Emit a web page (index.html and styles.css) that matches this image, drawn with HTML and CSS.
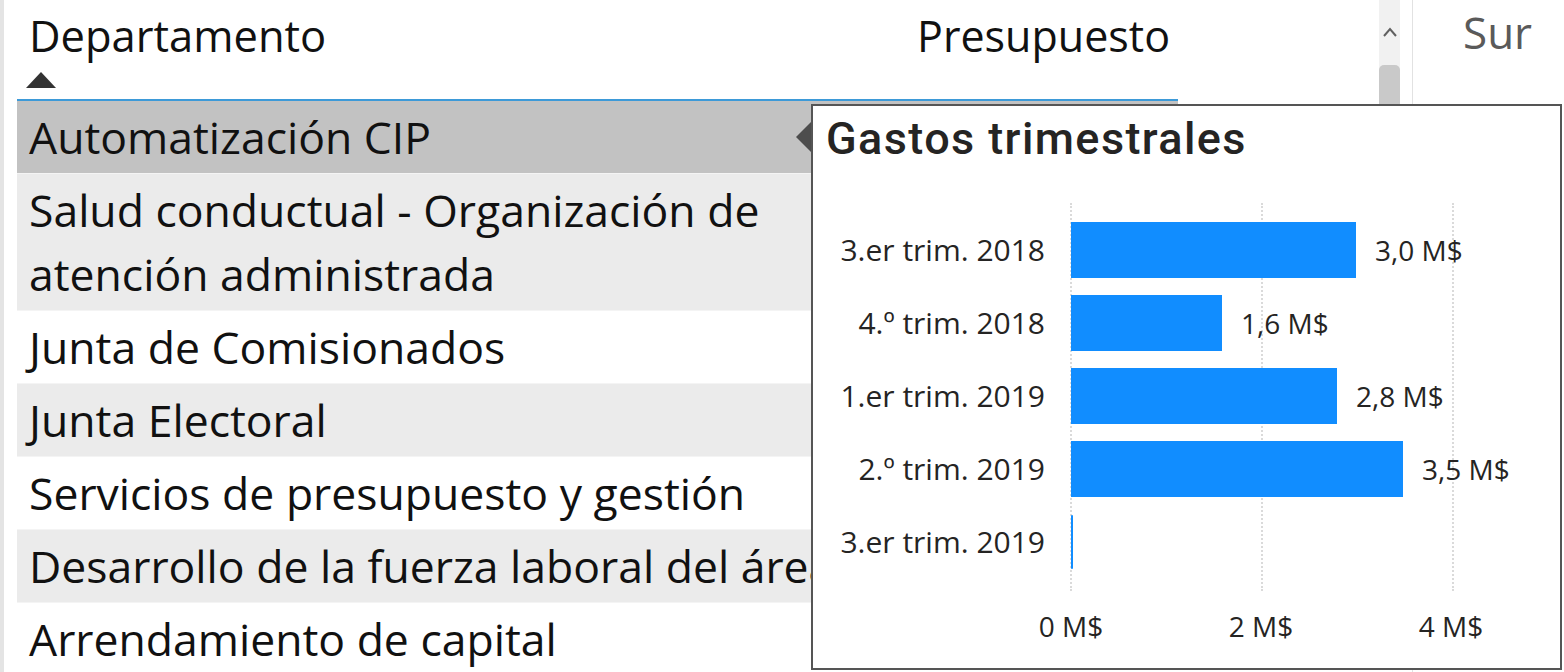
FILE: index.html
```html
<html>
  <head>
    <link rel="stylesheet" href="styles.css">
    <title>Presupuesto por departamento</title>
  </head>
  <body>
    <div class="page">
      <div class="edge"></div>

      <div class="table">
        <div class="head">
          <div class="col-name">
            <span>Departamento</span>
            <span class="sort"></span>
          </div>
          <div class="col-budget">Presupuesto</div>
        </div>
        <div class="row selected">Automatización CIP</div>
        <div class="row stripe">Salud conductual - Organización de<br>atención administrada</div>
        <div class="row">Junta de Comisionados</div>
        <div class="row stripe">Junta Electoral</div>
        <div class="row">Servicios de presupuesto y gestión</div>
        <div class="row stripe">Desarrollo de la fuerza laboral del área</div>
        <div class="row">Arrendamiento de capital</div>
      </div>

      <div class="scroll">
        <svg class="up" width="16" height="12" viewBox="0 0 16 12">
          <polyline points="2,10 8,3 14,10" fill="none" stroke="#606060" stroke-width="2"/>
        </svg>
        <div class="thumb"></div>
      </div>
      <div class="divider"></div>
      <div class="region">Sur</div>

      <!-- tooltip over the table -->
      <div class="tooltip">
        <div class="tip-title">Gastos trimestrales</div>
        <div class="chart">
          <div class="cats">
            <div class="cat">3.er trim. 2018</div>
            <div class="cat">4.º trim. 2018</div>
            <div class="cat">1.er trim. 2019</div>
            <div class="cat">2.º trim. 2019</div>
            <div class="cat">3.er trim. 2019</div>
          </div>
          <div class="plot-wrap">
            <div class="plot">
              <div class="grid">
                <div class="gl"></div>
                <div class="gl"></div>
                <div class="gl"></div>
              </div>
              <div class="bars">
                <div class="bar-row"><div class="bar" style="width:285px"></div><span class="val">3,0 M$</span></div>
                <div class="bar-row"><div class="bar" style="width:151px"></div><span class="val">1,6 M$</span></div>
                <div class="bar-row"><div class="bar" style="width:266px"></div><span class="val">2,8 M$</span></div>
                <div class="bar-row"><div class="bar" style="width:332px"></div><span class="val">3,5 M$</span></div>
                <div class="bar-row"><div class="bar tiny" style="width:2px"></div></div>
              </div>
            </div>
            <div class="axis">
              <span>0 M$</span>
              <span>2 M$</span>
              <span>4 M$</span>
            </div>
          </div>
        </div>
      </div>
    </div>
  </body>
</html>
```

FILE: styles.css
```css
body {
  margin: 0;
  background: white;
  font-family: "Open Sans", "Noto Sans", sans-serif;
  color: #111;
  overflow: hidden;
}

.page {
  display: flex;
  height: 672px;
  position: relative;
  overflow: hidden;
}

.edge {
  width: 4px;
  background: #e4e4e4;
  margin-right: 13px;
}

.table {
  width: 1161px;
}

.head {
  display: flex;
  justify-content: space-between;
  height: 99px;
  border-bottom: 2px solid #3d9ad8;
}
.col-name {
  display: flex;
  flex-direction: column;
  padding-left: 12px;
  padding-top: 6px;
  font-size: 43.5px;
  line-height: 60px;
}
.sort {
  width: 0;
  height: 0;
  margin-top: 6px;
  margin-left: -3px;
  border-left: 15px solid transparent;
  border-right: 15px solid transparent;
  border-bottom: 16px solid #333;
}
.col-budget {
  font-size: 43px;
  line-height: 60px;
  padding-top: 6px;
  padding-right: 8px;
}

.row {
  font-size: 44.5px;
  line-height: 64px;
  padding: 4px 12px;
  border-bottom: 1px solid #f4f4f4;
  white-space: nowrap;
}
.row.stripe {
  background: #ebebeb;
}
.row.selected {
  background: #c2c2c2;
}

.scroll {
  margin-left: 201px;
  width: 21px;
  height: 104px;
  background: #f1f1f1;
  display: flex;
  flex-direction: column;
  align-items: center;
}
.up {
  margin-top: 26px;
  margin-bottom: 27px;
}
.thumb {
  width: 21px;
  flex: 1;
  background: #c9c9c9;
  border-radius: 5px 5px 0 0;
}

.divider {
  width: 1px;
  margin-left: 12px;
  background: #e2e2e2;
}
.region {
  padding-left: 50px;
  padding-top: 2px;
  font-size: 44px;
  line-height: 60px;
  color: #5a5a5a;
}

.tooltip {
  position: absolute;
  left: 811px;
  top: 104px;
  width: 747px;
  height: 562px;
  border: 2px solid #555;
  background: white;
}
.tooltip::before {
  content: "";
  position: absolute;
  left: -17px;
  top: 16px;
  border-top: 15px solid transparent;
  border-bottom: 15px solid transparent;
  border-right: 15px solid #4d4d4d;
}

.tip-title {
  font-family: Roboto, sans-serif;
  font-weight: 500;
  font-size: 45px;
  line-height: 56px;
  padding: 5px 0 0 13px;
  color: #252423;
  letter-spacing: 1.4px;
}

.chart {
  display: flex;
  margin-top: 36px;
}
.cats {
  width: 232px;
  padding-top: 10px;
  margin-right: 26px;
}
.cat {
  height: 73px;
  display: flex;
  align-items: center;
  justify-content: flex-end;
  font-size: 30px;
  color: #252423;
}

.plot-wrap {
  display: flex;
  flex-direction: column;
}
.plot {
  display: grid;
  width: 470px;
}
.grid, .bars {
  grid-area: 1 / 1;
}
.grid {
  display: flex;
}
.gl {
  width: 190px;
  border-left: 2px dotted #dadada;
  margin-left: -1px;
}
.gl:last-child {
  width: 0;
}
.bars {
  padding: 10px 0 13px;
}
.bar-row {
  height: 73px;
  display: flex;
  align-items: center;
}
.bar {
  height: 56px;
  background: #118dff;
}
.bar.tiny {
  height: 54px;
  border-radius: 1px;
}
.val {
  margin-left: 19px;
  font-size: 28px;
  color: #252423;
}

.axis {
  display: flex;
  margin-left: -95px;
  padding-top: 16px;
}
.axis span {
  width: 190px;
  text-align: center;
  font-size: 28px;
  color: #252423;
}
```
